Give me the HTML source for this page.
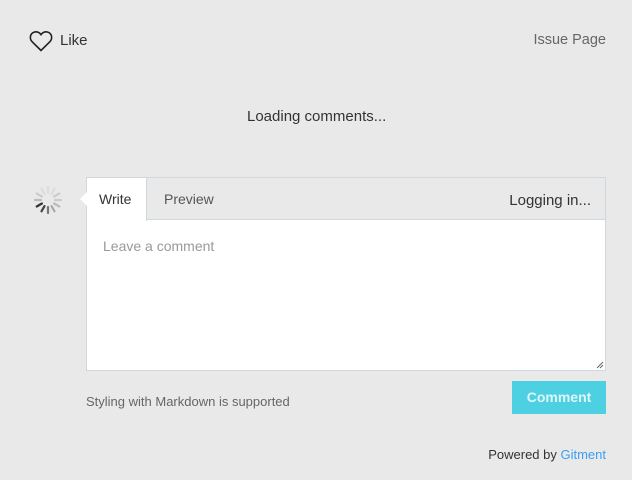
<!DOCTYPE html>
<html><head><meta charset="utf-8"><style>
*{margin:0;padding:0;box-sizing:border-box}
body{width:632px;height:480px;background:#e9e9e9;font-family:"Liberation Sans",sans-serif;position:relative;overflow:hidden;color:#333}
.a{position:absolute;white-space:nowrap}
</style></head><body>
<svg class="a" style="left:29px;top:30px" width="24" height="22" viewBox="0 0 24 22"><path d="M12 20.5 L3.2 11.8 C0.6 9.2 0.8 5 3.6 2.9 C6.2 1 9.8 1.6 12 4.6 C14.2 1.6 17.8 1 20.4 2.9 C23.2 5 23.4 9.2 20.8 11.8 Z" fill="none" stroke="#222" stroke-width="1.6"/></svg>
<div class="a" style="left:60px;top:32px;font-size:15px;color:#333">Like</div>
<div class="a" style="right:26px;top:32px;font-size:14.5px;color:#666">Issue Page</div>
<div class="a" style="left:247px;top:108px;font-size:15px;color:#333">Loading comments...</div>
<svg class="a" style="left:33px;top:185px" width="30" height="30" viewBox="-15 -15 30 30">
<g stroke-width="2.2" stroke-linecap="round">
<line x1="0" y1="-13" x2="0" y2="-7" stroke="#ddd"/>
<line x1="6.5" y1="-11.3" x2="3.5" y2="-6.1" stroke="#ddd" />
<line x1="11.3" y1="-6.5" x2="6.1" y2="-3.5" stroke="#ccc"/>
<line x1="13" y1="0" x2="7" y2="0" stroke="#ccc"/>
<line x1="11.3" y1="6.5" x2="6.1" y2="3.5" stroke="#bbb"/>
<line x1="6.5" y1="11.3" x2="3.5" y2="6.1" stroke="#aaa"/>
<line x1="0" y1="13" x2="0" y2="7" stroke="#777"/>
<line x1="-6.5" y1="11.3" x2="-3.5" y2="6.1" stroke="#444"/>
<line x1="-11.3" y1="6.5" x2="-6.1" y2="3.5" stroke="#333"/>
<line x1="-13" y1="0" x2="-7" y2="0" stroke="#bbb"/>
<line x1="-11.3" y1="-6.5" x2="-6.1" y2="-3.5" stroke="#ccc"/>
<line x1="-6.5" y1="-11.3" x2="-3.5" y2="-6.1" stroke="#ddd"/>
</g></svg>
<div class="a" style="left:86px;top:177px;width:520px;height:194px;border:1px solid #cfd8dc;background:#fff">
 <div class="a" style="left:0;top:0;width:518px;height:42px;background:#e9e9e9;border-bottom:1px solid #cfd8dc"></div>
 <div class="a" style="left:0;top:0;width:60px;height:43px;background:#fff;border-right:1px solid #cfd8dc"></div>
 <div class="a" style="left:12px;top:13px;font-size:14px;color:#333">Write</div>
 <div class="a" style="left:77px;top:13px;font-size:14px;color:#555">Preview</div>
 <div class="a" style="right:14px;top:14px;font-size:15px;color:#333">Logging in...</div>
 <div class="a" style="left:16px;top:60px;font-size:14px;color:#999">Leave a comment</div>
 <svg class="a" style="right:1px;bottom:1px" width="8" height="8"><path d="M7 1L1 7M7 4L4 7" stroke="#666" stroke-width="1"/></svg>
</div>
<svg class="a" style="left:80px;top:192px" width="8" height="14"><path d="M7 0L0 7L7 14Z" fill="#fff"/></svg>
<div class="a" style="left:86px;top:394px;font-size:13px;color:#666">Styling with Markdown is supported</div>
<div class="a" style="left:512px;top:381px;width:94px;height:33px;background:#4dd0e1;color:#e0f7fa;font-weight:bold;font-size:14px;text-align:center;line-height:33px">Comment</div>
<div class="a" style="right:26px;top:447px;font-size:13px;color:#333">Powered by <span style="color:#3a9ff5">Gitment</span></div>
</body></html>
